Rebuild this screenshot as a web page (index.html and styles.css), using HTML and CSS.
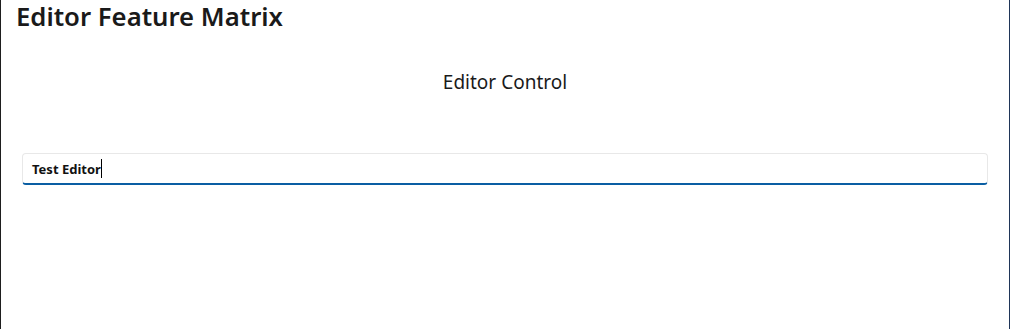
FILE: index.html
```html
<!DOCTYPE html>
<html>
<head>
<meta charset="utf-8">
<link rel="stylesheet" href="styles.css">
</head>
<body>
<div class="window">
  <h1 class="title">Editor Feature Matrix</h1>
  <h2 class="subtitle">Editor Control</h2>
  <div class="editor">
    <span class="editor-text">Test Editor</span><span class="caret"></span>
  </div>
</div>
</body>
</html>
```
FILE: styles.css
```css
html, body {
  margin: 0;
  padding: 0;
  background: #ffffff;
}
.window {
  box-sizing: border-box;
  height: 100vh;
  border-left: 1px solid #1e1e1e;
  border-right: 1px solid #1f3558;
  font-family: "Noto Sans", "Open Sans", sans-serif;
  color: #1a1a1a;
  display: flex;
  flex-direction: column;
}
.title {
  margin: 0;
  padding: 0 0 0 15px;
  font-size: 25.7px;
  font-weight: 600;
  line-height: 33px;
}
.subtitle {
  margin: 36px 0 0 0;
  text-align: center;
  font-size: 19px;
  font-weight: 400;
  line-height: 26px;
}
.editor {
  margin: 58px 21px 0 21px;
  height: 32px;
  box-sizing: border-box;
  border: 1px solid #e8e8e8;
  border-bottom: 2px solid #0a5ea3;
  border-radius: 4px;
  display: flex;
  align-items: center;
  padding-left: 9px;
}
.editor-text {
  font-size: 13px;
  font-weight: 700;
  color: #111;
}
.caret {
  display: inline-block;
  width: 1px;
  height: 19px;
  background: #000;
}
```
